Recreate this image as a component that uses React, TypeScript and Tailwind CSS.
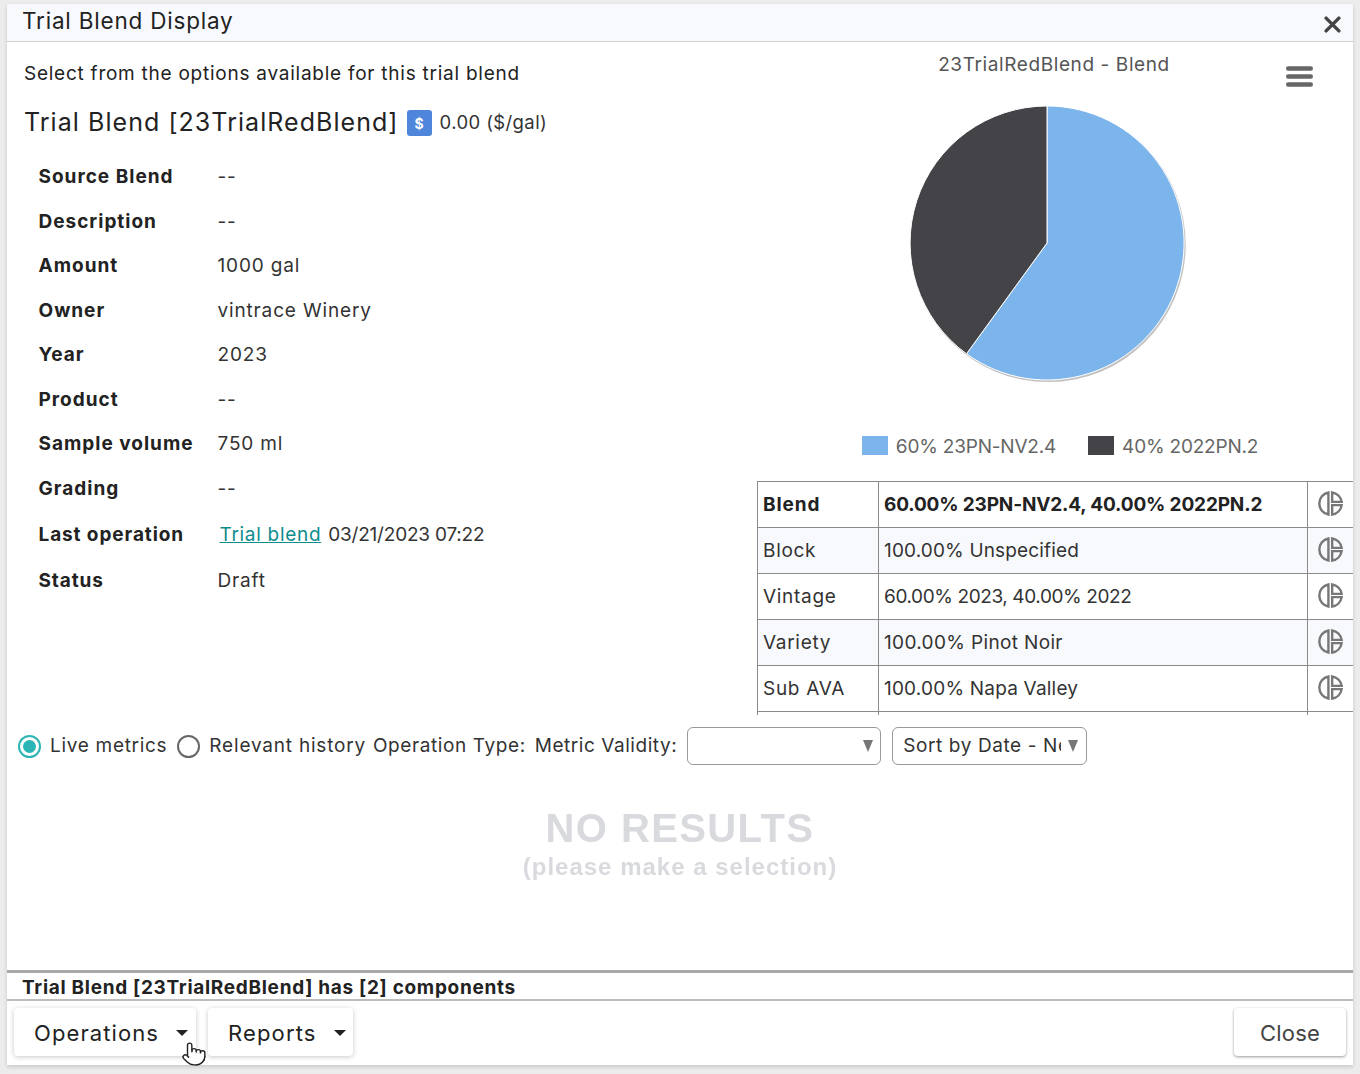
import React from "react";
import { Pointer } from "lucide-react";

const details: [string, React.ReactNode][] = [
  ["Source Blend", "--"],
  ["Description", "--"],
  ["Amount", "1000 gal"],
  ["Owner", "vintrace Winery"],
  ["Year", "2023"],
  ["Product", "--"],
  ["Sample volume", "750 ml"],
  ["Grading", "--"],
];

const rows = [
  { a: "Block", b: "100.00% Unspecified", cls: "tracking-[0.15px]" },
  { a: "Vintage", b: "60.00% 2023, 40.00% 2022", cls: "tracking-[-0.4px]" },
  { a: "Variety", b: "100.00% Pinot Noir", cls: "tracking-[0.35px]" },
  { a: "Sub AVA", b: "100.00% Napa Valley", cls: "tracking-[0.2px]" },
];

function BlendIcon() {
  return (
    <svg viewBox="0 0 24 24" className="w-[25px] h-[25px] mx-auto -mt-[2px]" fill="none" stroke="#777" strokeWidth="2.3">
      <path d="M10 1.4 A10.8 10.8 0 0 0 10 22.6 Z" />
      <path d="M13.6 1.4 A10.8 10.8 0 0 1 22.7 10.4 H13.6 Z" />
      <path d="M13.6 13.6 H22.7 A10.8 10.8 0 0 1 13.6 22.6 Z" />
    </svg>
  );
}

function Caret() {
  return <span className="block w-0 h-0 border-x-[6px] border-x-transparent border-t-[6px] border-t-[#222]" />;
}

function SelectCaret() {
  return <span className="block shrink-0 w-0 h-0 border-x-[5px] border-x-transparent border-t-[12px] border-t-[#777]" />;
}

export default function App() {
  return (
    <div className="h-[1074px] w-[1360px] bg-[#ececec] pt-[4px] pl-[7px] overflow-hidden font-['Inter',sans-serif] text-[#222]">
      <div className="relative flex flex-col w-[1346px] h-[1061px] bg-white shadow-[0_2px_4px_rgba(0,0,0,0.15)]">
        <header className="flex items-center justify-between h-[38px] shrink-0 bg-[#f8f9fc] border-b border-[#cfcfcf] pl-[15px] pr-[12px]">
          <span className="text-[22.5px] tracking-[0.8px] leading-none -mt-[3px]">Trial Blend Display</span>
          <svg viewBox="0 0 16 16" className="w-[17px] h-[17px] mt-[4px]" stroke="#444" strokeWidth="3.2" strokeLinecap="round">
            <path d="M2 2 L14 14 M14 2 L2 14" />
          </svg>
        </header>

        <div className="flex h-[673px] shrink-0">
          <section className="w-[750px] shrink-0 pl-[17px] pt-[21px]">
            <p className="text-[19px] leading-[22px] tracking-[0.75px]">Select from the options available for this trial blend</p>
            <div className="flex items-center mt-[21px] h-[34px]">
              <h1 className="text-[25px] font-normal tracking-[1.05px] whitespace-nowrap">Trial Blend [23TrialRedBlend]</h1>
              <span className="ml-[8px] flex items-center justify-center w-[25px] h-[26px] rounded-[3px] bg-[#4f86db] text-white text-[14px] font-bold">$</span>
              <span className="ml-[8px] text-[18.5px] tracking-[0.4px] text-[#333]">0.00 ($/gal)</span>
            </div>
            <dl className="mt-[15px] pl-[14.5px] text-[19px]">
              {details.map(([k, v]) => (
                <div key={k} className="flex items-center h-[44.5px]">
                  <dt className="w-[179px] font-bold tracking-[1px] shrink-0 whitespace-nowrap">{k}</dt>
                  <dd className="tracking-[0.85px] text-[#333]">{v}</dd>
                </div>
              ))}
              <div className="flex items-center h-[46px] mt-[1px]">
                <dt className="w-[179px] font-bold tracking-[0.9px] shrink-0">Last operation</dt>
                <dd className="text-[#333] whitespace-nowrap">
                  <a className="ml-[2px] text-[#0f8c8c] underline tracking-[0.7px]">Trial blend</a>
                  <span className="ml-[7px] tracking-[-0.2px]">03/21/2023 07:22</span>
                </dd>
              </div>
              <div className="flex items-center h-[46px]">
                <dt className="w-[179px] font-bold tracking-[0.9px] shrink-0">Status</dt>
                <dd className="tracking-[0.85px] text-[#333]">Draft</dd>
              </div>
            </dl>
          </section>

          <section className="relative w-[596px] shrink-0 flex flex-col">
            <div className="h-[439px] flex flex-col items-center shrink-0">
              <p className="mt-[11px] text-[19px] leading-[24px] tracking-[0.6px] text-[#555] -ml-[2px]">23TrialRedBlend - Blend</p>
              <svg viewBox="0 0 284 284" className="w-[284px] h-[284px] mt-[24px] -ml-[16px] overflow-visible">
                <circle cx="142" cy="142" r="137.5" fill="#999" transform="translate(1.2 1.6)" opacity="0.6" />
                <path d="M142 142 L142 5 A137 137 0 1 1 61.5 252.8 Z" fill="#7cb5ec" stroke="#fff" />
                <path d="M142 142 L61.5 252.8 A137 137 0 0 1 142 5 Z" fill="#434348" stroke="#fff" />
              </svg>
              <div className="flex items-center mt-[48px] text-[19px] text-[#666] tracking-[-0.2px] ml-[10px]">
                <span className="w-[26px] h-[19px] bg-[#7cb5ec] -mt-[4px]" />
                <span className="ml-[8px]">60% 23PN-NV2.4</span>
                <span className="ml-[32px] w-[26px] h-[19px] bg-[#434348] -mt-[4px]" />
                <span className="ml-[8px]">40% 2022PN.2</span>
              </div>
            </div>
            <svg viewBox="0 0 27 21" className="absolute left-[529px] top-[24px] w-[27px] h-[21px]" stroke="#666" strokeWidth="4.4" strokeLinecap="round">
              <path d="M2.2 2.5 H24.8 M2.2 10.5 H24.8 M2.2 18.5 H24.8" />
            </svg>
            <div className="h-[234px] overflow-hidden shrink-0">
              <table className="w-[596px] table-fixed border-collapse text-[19px] text-[#333]">
                <colgroup>
                  <col className="w-[121px]" />
                  <col className="w-[429px]" />
                  <col className="w-[46px]" />
                </colgroup>
                <tbody>
                  <tr className="h-[46px] font-bold text-[#222]">
                    <td className="border border-[#8a8a8a] px-[5px] pt-[1px] tracking-[0.9px]">Blend</td>
                    <td className="border border-[#8a8a8a] px-[5px] pt-[1px] whitespace-nowrap tracking-[-0.15px]">60.00% 23PN-NV2.4, 40.00% 2022PN.2</td>
                    <td className="border border-[#8a8a8a]"><BlendIcon /></td>
                  </tr>
                  {rows.map((r, i) => (
                    <tr key={r.a} className={i % 2 === 0 ? "h-[46px] bg-[#f8f9fc]" : "h-[46px] bg-white"}>
                      <td className="border border-[#8a8a8a] px-[5px] pt-[1px] tracking-[0.7px]">{r.a}</td>
                      <td className={"border border-[#8a8a8a] px-[5px] pt-[1px] " + r.cls}>{r.b}</td>
                      <td className="border border-[#8a8a8a]"><BlendIcon /></td>
                    </tr>
                  ))}
                  <tr className="h-[46px]">
                    <td className="border border-[#8a8a8a]" />
                    <td className="border border-[#8a8a8a]" />
                    <td className="border border-[#8a8a8a]" />
                  </tr>
                </tbody>
              </table>
            </div>
          </section>
        </div>

        <div className="flex items-center h-[62px] pl-[11px] shrink-0 text-[19px] text-[#333] whitespace-nowrap">
          <span className="flex items-center justify-center w-[23px] h-[23px] rounded-full border-[2px] border-[#2bb5b5]">
            <span className="w-[13px] h-[13px] rounded-full bg-[#2bb5b5]" />
          </span>
          <span className="ml-[9px] tracking-[0.7px]">Live metrics</span>
          <span className="ml-[10px] w-[23px] h-[23px] rounded-full border-[2px] border-[#666]" />
          <span className="ml-[9px] tracking-[0.8px]">Relevant history</span>
          <span className="ml-[7px] tracking-[0.6px]">Operation Type:</span>
          <span className="ml-[9px] tracking-[0.55px]">Metric Validity:</span>
          <span className="ml-[10px] flex items-center justify-end w-[194px] h-[38px] rounded-[6px] border border-[#999] pr-[7px]">
            <SelectCaret />
          </span>
          <span className="ml-[11px] flex items-center justify-between w-[195px] h-[38px] rounded-[6px] border border-[#999] pl-[10px] pr-[8px]">
            <span className="w-[158px] overflow-hidden tracking-[0.6px]">Sort by Date - Newest</span>
            <SelectCaret />
          </span>
        </div>

        <div className="flex-1 flex flex-col items-center font-['Liberation_Sans',sans-serif] font-bold text-[#d9dade] pt-[29px] blur-[0.4px]">
          <p className="text-[40px] leading-[44px] tracking-[1.4px]">NO RESULTS</p>
          <p className="text-[24px] leading-[26px] mt-[4px] tracking-[1px]">(please make a selection)</p>
        </div>

        <div className="h-[31px] shrink-0 flex items-center border-t-[3px] border-[#a9a9a9] border-b-2 border-b-[#bdbdbd] pl-[15px] text-[19px] font-bold tracking-[0.7px] pt-[5px]">
          Trial Blend [23TrialRedBlend] has [2] components
        </div>

        <footer className="relative flex items-start justify-between h-[64px] shrink-0 pt-[7px] px-[7px] text-[22px]">
          <div className="flex gap-[12px]">
            <button className="flex items-center w-[182px] h-[48px] pt-[2px] rounded-[4px] bg-white shadow-[0_1px_5px_rgba(0,0,0,0.22)] pl-[20px]">
              <span className="tracking-[1.1px]">Operations</span>
              <span className="ml-[17px]"><Caret /></span>
            </button>
            <button className="flex items-center w-[145px] h-[48px] pt-[2px] rounded-[4px] bg-white shadow-[0_1px_5px_rgba(0,0,0,0.22)] pl-[20px]">
              <span className="tracking-[1.15px]">Reports</span>
              <span className="ml-[17px]"><Caret /></span>
            </button>
          </div>
          <button className="w-[112px] h-[48px] pt-[2px] rounded-[4px] bg-white text-[#444] tracking-[0.2px] shadow-[0_1px_3px_rgba(0,0,0,0.4)]">Close</button>
          <Pointer className="absolute left-[174px] top-[38px] w-[26px] h-[30px]" fill="#fff" stroke="#222" strokeWidth={1.3} />
        </footer>
      </div>
    </div>
  );
}
